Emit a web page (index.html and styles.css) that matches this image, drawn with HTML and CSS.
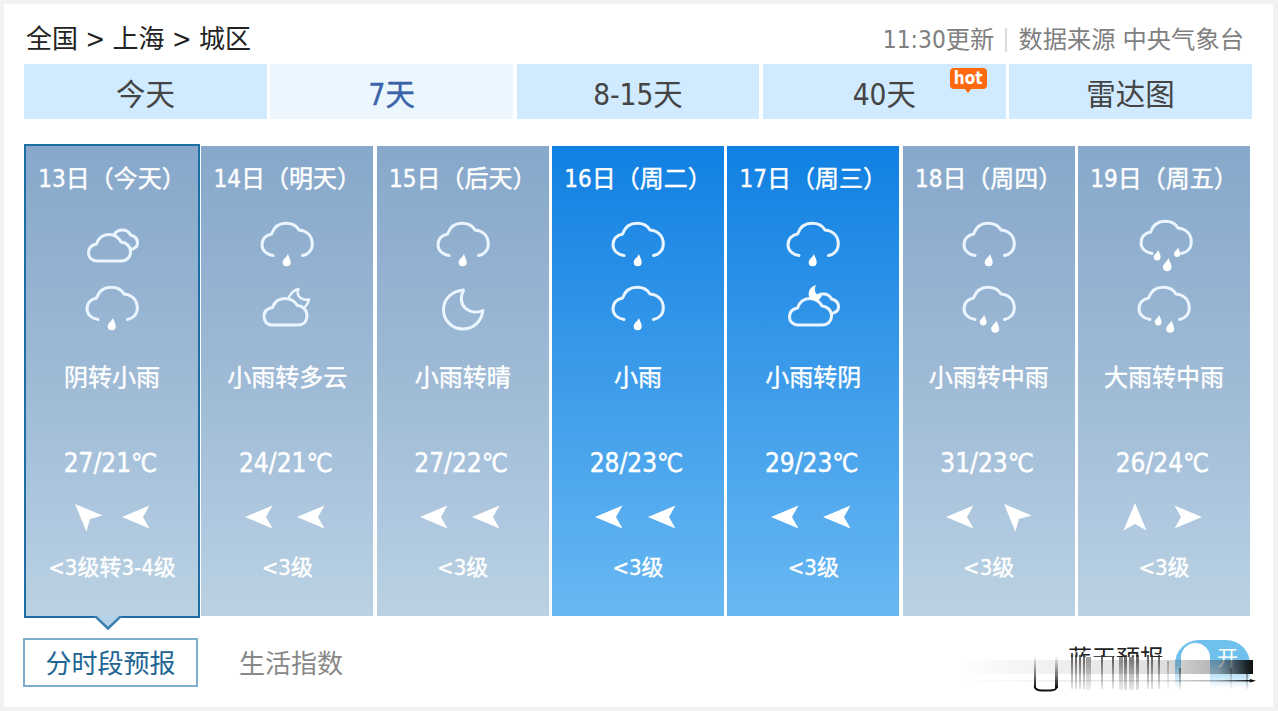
FILE: index.html
```html
<!DOCTYPE html>
<html lang="zh-CN">
<head>
    <meta charset="UTF-8">
    <meta name="viewport" content="width=device-width, initial-scale=1.0">
    <title>上海天气预报</title>
    <link rel="stylesheet" href="styles.css">
</head>
<body>
    <!-- Shared icons -->
    <svg class="sprite" width="0" height="0">
        <symbol id="rain-cloud" viewBox="0 0 60 56">
            <path class="line" d="M16 37.5C9 36.5 5 32 5 27c0-6 4-10 9.500-11C17 9 22 5.300 29 5.300c6 0 10.500 2.500 13 6.700C50 13 55.300 18 55.300 26c0 6-4 10.500-9.800 11.500"/>
        </symbol>
        <symbol id="drop" viewBox="0 0 10 14">
            <path class="fill" d="M6.500 0C8 4 9.500 6 9.500 9a4.300 4.300 0 0 1-8.600 0C.9 5.500 5 4 6.500 0z"/>
        </symbol>
        <symbol id="light-rain" viewBox="0 0 60 56">
            <use href="#rain-cloud" width="60" height="56"/>
            <use href="#drop" x="24.500" y="36" width="10" height="13"/>
        </symbol>
        <symbol id="mid-rain" viewBox="0 0 60 56">
            <use href="#rain-cloud" width="60" height="56"/>
            <use href="#drop" x="20" y="33" width="8" height="11"/>
            <use href="#drop" x="31" y="38.500" width="10" height="13"/>
        </symbol>
        <symbol id="heavy-rain" viewBox="0 0 60 56">
            <use href="#rain-cloud" width="60" height="56"/>
            <use href="#drop" x="17" y="33.500" width="8" height="12"/>
            <use href="#drop" x="37" y="31.500" width="8" height="10"/>
            <use href="#drop" x="26" y="42" width="10" height="14"/>
        </symbol>
        <symbol id="overcast" viewBox="0 0 60 56">
            <path class="line" d="M15 43H39C45 43 48.500 39 48.500 34 48.500 28 44 24.500 39 24 36 18.500 32 16.500 27 16.500 20.500 16.500 16.500 20 14.500 26 9 27 6.500 30.500 6.500 35S10 43 15 43z"/>
            <path class="line" d="M32 17C34 13 37 12 40.500 12 44.500 12 47 14 48.500 17 53 18 55.500 21 55.500 25S53 30.500 49 31.500"/>
        </symbol>
        <symbol id="cloudy-night" viewBox="0 0 60 56">
            <path class="line" d="M15 43H41C47.500 43 50 38.500 50 33.500 50 28 46 24 40.500 23.500 37 18 33 16.500 28 16.500 21.500 16.500 17.500 19.500 15.500 25.500 10 26.500 7 30 7 34.500S10 43 15 43z"/>
            <path class="line thin" d="M32 15C34 11 37 8 41.500 7 39 13 43 19 52 17.500 51.500 21 50 23 47.500 25.500"/>
        </symbol>
        <symbol id="overcast-night" viewBox="0 0 60 56">
            <use href="#overcast" width="60" height="56"/>
            <path class="fill" d="M33 3C26 5 24.500 11 26.500 16L34 20 39 14C33 14 30 9 33 3z"/>
        </symbol>
        <symbol id="moon" viewBox="0 0 60 56">
            <path class="line" d="M30.500 8C19 9 10.500 17 10.500 27.500 10.500 38.500 19 47 30 47 41 47 48.500 39 50 28.500 38 34 23 25 30.500 8z"/>
        </symbol>
        <symbol id="arrow" viewBox="0 0 30 30">
            <path class="fill" d="M1 15L28.500 3.500 22 15 28.500 26.500z"/>
        </symbol>
    </svg>

    <div class="container">
        <header class="header">
            <div class="crumbs">全国 &gt; 上海 &gt; 城区</div>
            <div class="source"><span>11:30更新</span><i></i><span>数据来源 中央气象台</span></div>
        </header>

        <nav class="tabs">
            <a class="tab">今天</a>
            <a class="tab active">7天</a>
            <a class="tab">8-15天</a>
            <a class="tab">40天<span class="hot">hot</span></a>
            <a class="tab">雷达图</a>
        </nav>

        <ul class="days">
            <li class="day selected">
                <h2>13日（今天）</h2>
                <svg class="sky"><use href="#overcast"/></svg>
                <svg class="sky"><use href="#light-rain"/></svg>
                <p class="weather">阴转小雨</p>
                <p class="temp">27/21℃</p>
                <div class="wind"><svg class="nw"><use href="#arrow"/></svg><svg><use href="#arrow"/></svg></div>
                <p class="level">&lt;3级转3-4级</p>
                <svg class="pointer" viewBox="0 0 28 15"><path d="M1 0L14 12.500 27 0"/></svg>
            </li>
            <li class="day">
                <h2>14日（明天）</h2>
                <svg class="sky"><use href="#light-rain"/></svg>
                <svg class="sky"><use href="#cloudy-night"/></svg>
                <p class="weather">小雨转多云</p>
                <p class="temp">24/21℃</p>
                <div class="wind"><svg><use href="#arrow"/></svg><svg><use href="#arrow"/></svg></div>
                <p class="level">&lt;3级</p>
            </li>
            <li class="day">
                <h2>15日（后天）</h2>
                <svg class="sky"><use href="#light-rain"/></svg>
                <svg class="sky"><use href="#moon"/></svg>
                <p class="weather">小雨转晴</p>
                <p class="temp">27/22℃</p>
                <div class="wind"><svg><use href="#arrow"/></svg><svg><use href="#arrow"/></svg></div>
                <p class="level">&lt;3级</p>
            </li>
            <li class="day bright">
                <h2>16日（周二）</h2>
                <svg class="sky"><use href="#light-rain"/></svg>
                <svg class="sky"><use href="#light-rain"/></svg>
                <p class="weather">小雨</p>
                <p class="temp">28/23℃</p>
                <div class="wind"><svg><use href="#arrow"/></svg><svg><use href="#arrow"/></svg></div>
                <p class="level">&lt;3级</p>
            </li>
            <li class="day bright">
                <h2>17日（周三）</h2>
                <svg class="sky"><use href="#light-rain"/></svg>
                <svg class="sky"><use href="#overcast-night"/></svg>
                <p class="weather">小雨转阴</p>
                <p class="temp">29/23℃</p>
                <div class="wind"><svg><use href="#arrow"/></svg><svg><use href="#arrow"/></svg></div>
                <p class="level">&lt;3级</p>
            </li>
            <li class="day">
                <h2>18日（周四）</h2>
                <svg class="sky"><use href="#light-rain"/></svg>
                <svg class="sky"><use href="#mid-rain"/></svg>
                <p class="weather">小雨转中雨</p>
                <p class="temp">31/23℃</p>
                <div class="wind"><svg><use href="#arrow"/></svg><svg class="nw"><use href="#arrow"/></svg></div>
                <p class="level">&lt;3级</p>
            </li>
            <li class="day">
                <h2>19日（周五）</h2>
                <svg class="sky heavy"><use href="#heavy-rain"/></svg>
                <svg class="sky"><use href="#mid-rain"/></svg>
                <p class="weather">大雨转中雨</p>
                <p class="temp">26/24℃</p>
                <div class="wind"><svg class="n"><use href="#arrow"/></svg><svg class="e"><use href="#arrow"/></svg></div>
                <p class="level">&lt;3级</p>
            </li>
        </ul>

        <div class="footer">
            <a class="btn">分时段预报</a>
            <a class="link">生活指数</a>
            <div class="bluesky">
                <span class="bluesky-text">蓝天预报</span>
                <span class="switch"><b>开</b></span>
                <!-- Streaks running down and across the switch -->
                <svg class="smear" viewBox="0 0 306 58">
                    <defs>
                        <linearGradient id="fade-x">
                            <stop offset="0" stop-color="#000" stop-opacity="0"/>
                            <stop offset=".7" stop-color="#000" stop-opacity=".13"/>
                            <stop offset=".88" stop-color="#222" stop-opacity=".35"/>
                            <stop offset="1" stop-color="#000" stop-opacity=".95"/>
                        </linearGradient>
                        <linearGradient id="fade-y" x2="0" y2="1">
                            <stop offset="0" stop-color="#333" stop-opacity=".8"/>
                            <stop offset="1" stop-color="#555" stop-opacity=".15"/>
                        </linearGradient>
                        <linearGradient id="rise-y" x2="0" y2="1">
                            <stop offset="0" stop-color="#222" stop-opacity="0"/>
                            <stop offset="1" stop-color="#111"/>
                        </linearGradient>
                    </defs>
                    <rect x="112" y="19" width="103" height="34" fill="#fff"/>
                    <g fill="url(#fade-y)">
                        <rect x="119" y="17" width="2" height="34"/>
                        <rect x="123" y="17" width="2" height="34"/>
                        <rect x="127" y="17" width="2" height="34"/>
                        <rect x="131" y="17" width="2" height="34"/>
                        <rect x="134" y="19" width="5" height="33" opacity=".6"/>
                        <rect x="149" y="17" width="2" height="34"/>
                        <rect x="160" y="19" width="2" height="32"/>
                        <rect x="167" y="19" width="4" height="33" opacity=".7"/>
                        <rect x="172" y="17" width="3" height="35"/>
                        <rect x="177" y="19" width="5" height="33" opacity=".8"/>
                        <rect x="184" y="17" width="3" height="35"/>
                        <rect x="195" y="17" width="2" height="34"/>
                        <rect x="199" y="17" width="2" height="34"/>
                        <rect x="206" y="17" width="2" height="34"/>
                        <rect x="215" y="23" width="2" height="28" opacity=".4"/>
                        <rect x="227" y="30" width="2" height="21" opacity=".7"/>
                        <rect x="278" y="30" width="2" height="21" opacity=".4"/>
                        <rect x="294" y="36" width="2" height="15" opacity=".6"/>
                    </g>
                    <rect x="82" y="18" width="2" height="32" fill="url(#rise-y)"/>
                    <rect x="103" y="18" width="3" height="32" fill="url(#rise-y)"/>
                    <path d="M82.500 48C83 51 86 52.500 90 52.500H98C102 52.500 105 51 105 48" fill="none" stroke="#111" stroke-width="1.800"/>
                    <rect x="5" y="22" width="296" height="14" fill="url(#fade-x)"/>
                    <rect x="5" y="42" width="296" height="1.500" fill="url(#fade-x)"/>
                    <path d="M298 41L304 42.700 298 44.500z" fill="#111"/>
                </svg>
            </div>
        </div>
    </div>
</body>
</html>
```
FILE: styles.css
```css
* {
    margin: 0;
    padding: 0;
    box-sizing: border-box;
}

body {
    height: 711px;
    padding: 4px 5px 0 4px;
    overflow: hidden;
    background: #f2f2f2;
    font-family: "DejaVu Sans Condensed", "Noto Sans CJK SC", sans-serif;
}

.sprite {
    position: absolute;
}

.container {
    height: 703px;
    padding: 12px 21px 0 20px;
    background: #fff;
}

.header {
    display: flex;
    justify-content: space-between;
    height: 48px;
    line-height: 46px;
    padding: 0 8px 0 2px;
    white-space: nowrap;
}

.crumbs {
    font-size: 26px;
    color: #222;
}

.source {
    display: flex;
    align-items: center;
    height: 48px;
    font-size: 24.3px;
    color: #808080;
}

.source i {
    width: 2px;
    height: 24px;
    margin: 0 11px;
    background: #ddd;
}

/* Tabs */
.tabs {
    display: grid;
    grid-template-columns: repeat(5, 1fr);
    grid-template-rows: 55px;
    gap: 3.5px;
    line-height: 62px;
    text-align: center;
    font-size: 29.5px;
    color: #444;
}

.tab {
    position: relative;
    background: #d0eaff;
}

.tab.active {
    background: #ebf6ff;
    color: #3a63a8;
    -webkit-text-stroke: .4px;
}

.hot {
    position: absolute;
    right: 19px;
    top: 4px;
    width: 37px;
    height: 21px;
    border-radius: 4px;
    background: #ff6a10;
    color: #fff;
    font: bold 17px/20px "DejaVu Sans Condensed", sans-serif;
}

.hot::after {
    content: '';
    position: absolute;
    left: 14px;
    top: 20px;
    border: 4px solid transparent;
    border-top: 5px solid #ff6a10;
    border-bottom: 0;
}

/* Days */
.days {
    display: grid;
    grid-template-columns: repeat(7, 172px);
    justify-content: space-between;
    margin: 27px 2px 0;
    list-style: none;
}

.day {
    position: relative;
    height: 470px;
    padding-top: 14px;
    display: flex;
    flex-direction: column;
    align-items: center;
    background: linear-gradient(#87a8cb, #9ebad5 50%, #b0c9e0 82%, #bad2e1);
    color: #fff;
    white-space: nowrap;
    -webkit-text-stroke: .4px;
}

.day.bright {
    background: linear-gradient(#1080e2, #69b8f2);
}

.day.selected {
    box-shadow: 0 0 0 2px #1d6fa3;
}

.day h2 {
    height: 58px;
    line-height: 38px;
    font-size: 24px;
    font-weight: normal;
}

.sky {
    width: 60px;
    height: 56px;
    margin-bottom: 8px;
}

.sky.heavy {
    transform: translate(2px, -2px);
}

.line {
    fill: none;
    stroke: #ebf5ff;
    stroke-width: 3;
    stroke-linecap: round;
    stroke-linejoin: round;
}

.line.thin {
    stroke-width: 2.4;
}

.fill {
    fill: #fff;
}

.weather {
    margin-top: 13px;
    font-size: 24px;
    line-height: 38px;
}

.temp {
    margin: 47px 3px 0 0;
    font-size: 26px;
    line-height: 38px;
}

.wind {
    display: flex;
    gap: 22.5px;
    margin: 20px 5px 0 0;
}

.wind svg {
    width: 30px;
    height: 30px;
}

.wind .nw {
    transform: translate(2px, -3px) rotate(45deg);
}

.wind .n {
    transform: rotate(90deg);
}

.wind .e {
    transform: rotate(180deg);
}

.level {
    margin-top: 17px;
    font-size: 22px;
    line-height: 38px;
}

.pointer {
    position: absolute;
    left: 68px;
    top: 470px;
    width: 28px;
    height: 15px;
    fill: #b5d3e8;
    stroke: #3c81ae;
    stroke-width: 2.5;
}

/* Footer */
.footer {
    display: flex;
    height: 49px;
    margin: 22px 0 0 -1px;
    line-height: 52px;
    font-size: 26px;
    color: #888;
}

.btn {
    width: 175px;
    border: 2px solid #7eaccb;
    text-align: center;
    line-height: 49px;
    color: #1d6595;
}

.link {
    margin-left: 41px;
}

.bluesky {
    position: relative;
    display: flex;
    width: 300px;
    margin-left: auto;
    padding-left: 116px;
}

.bluesky-text {
    font-size: 24px;
    line-height: 42px;
    color: #222;
}

.switch {
    position: relative;
    width: 75px;
    height: 50px;
    margin: 2px 0 0 11px;
    border-radius: 24px 24px 0 0;
    background: linear-gradient(#6fc0ec 38%, rgba(111, 192, 236, 0) 96%);
}

.switch::before {
    content: '';
    position: absolute;
    left: 6px;
    top: 3px;
    width: 29px;
    height: 47px;
    border-radius: 15px 15px 0 0;
    background: #fff;
}

.switch b {
    position: absolute;
    left: 42px;
    top: 0;
    font-size: 21px;
    font-weight: normal;
    line-height: 37px;
    color: #fff;
}

.smear {
    position: absolute;
    left: 0;
    top: 0;
    width: 306px;
    height: 58px;
}
```
